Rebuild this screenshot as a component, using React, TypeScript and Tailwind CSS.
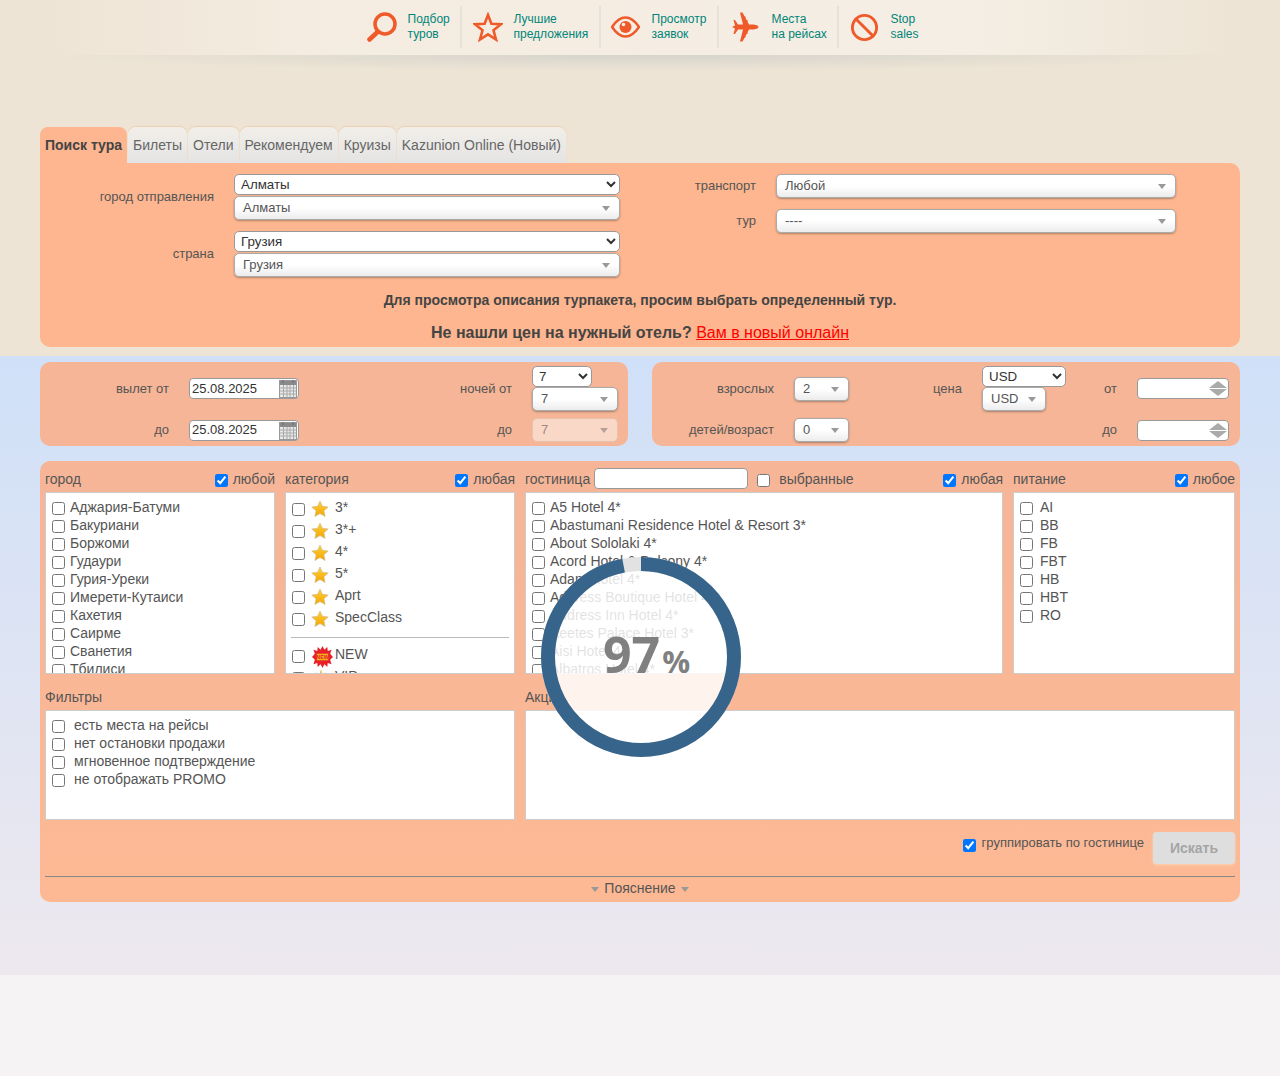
import React from 'react';
import { Ban } from 'lucide-react';

const labelCls = 'text-[13px] text-[#555] text-right';

function FakeSelect({ label, w, disabled }: { label: string; w: string; disabled?: boolean }) {
  return (
    <div
      className={`${w} relative h-[24px] flex items-center pl-2 rounded-[5px] border text-[13px] shadow-[0_1px_2px_rgba(0,0,0,0.3)] ${
        disabled
          ? 'bg-[#fad8c8] border-[#e8c0ac] text-[#a08a80] shadow-none'
          : 'bg-gradient-to-b from-white via-white to-[#ececec] border-[#aaa] text-[#555]'
      }`}
    >
      {label}
      <span
        className={`absolute right-[9px] top-[9px] w-0 h-0 border-x-[4px] border-x-transparent border-t-[5px] ${
          disabled ? 'border-t-[#b8a096]' : 'border-t-[#999]'
        }`}
      />
    </div>
  );
}

function NativeSelect({ value, w }: { value: string; w: string }) {
  return (
    <select
      defaultValue={value}
      className={`${w} h-[21px] bg-white rounded-[5px] border border-[#999] text-[13.33px] text-[#333] pl-[2px]`}
    >
      <option>{value}</option>
    </select>
  );
}

function CalendarIcon() {
  return (
    <svg width="18" height="19" viewBox="0 0 18 19" className="absolute right-[1px] top-[0px]">
      <rect x="0.5" y="1.5" width="17" height="17" fill="#e8e8e8" stroke="#999" />
      <rect x="1" y="2" width="16" height="4" fill="#8a8a8a" />
      <path d="M4 1v3M14 1v3" stroke="#777" strokeWidth="1.5" />
      <path d="M1 9h16M1 12h16M1 15h16M4.500 6v12M8 6v12M11 6v12M14.500 6v12" stroke="#aaa" strokeWidth="1" />
    </svg>
  );
}

function DateInput({ value }: { value: string }) {
  return (
    <div className="relative w-[110px] h-[21px] bg-white rounded-[4px] border border-[#999] text-[13px] text-[#333] flex items-center pl-[2px]">
      {value}
      <CalendarIcon />
    </div>
  );
}

function SpinInput() {
  return (
    <div className="relative w-[92px] h-[21px] bg-white rounded-[4px] border border-[#999]">
      <span className="absolute right-[1px] top-[2px] w-0 h-0 border-x-[9px] border-x-transparent border-b-[7px] border-b-[#aaa]" />
      <span className="absolute right-[1px] bottom-[2px] w-0 h-0 border-x-[9px] border-x-transparent border-t-[7px] border-t-[#aaa]" />
    </div>
  );
}

function GoldStar() {
  return (
    <svg width="18" height="18" viewBox="0 0 18 18" className="shrink-0">
      <defs>
        <linearGradient id="gold" x1="0" y1="0" x2="0" y2="1">
          <stop offset="0" stopColor="#ffd23c" />
          <stop offset="1" stopColor="#f5a400" />
        </linearGradient>
      </defs>
      <path d="M9 1l2.400 5.300 5.800.6-4.300 3.900 1.200 5.700L9 13.600l-5.100 2.900 1.200-5.700L.8 6.900l5.800-.6z" fill="url(#gold)" stroke="#c9b98c" strokeWidth="0.6" />
    </svg>
  );
}

function NewBurst() {
  return (
    <svg width="21" height="22" viewBox="0 0 22 20" className="shrink-0" preserveAspectRatio="none">
      <polygon
        points="11,0 13,3.500 16,1 16.500,4.500 20.500,3.500 19,7 22,10 19,12.500 20.500,16.500 16.500,15.500 16,19 13,16.500 11,20 9,16.500 6,19 5.500,15.500 1.500,16.500 3,12.500 0,10 3,7 1.500,3.500 5.500,4.500 6,1 9,3.500"
        fill="#e8202a"
      />
      <rect x="5" y="7" width="12" height="6" fill="#f3b01c" />
      <text x="11" y="12" textAnchor="middle" fontSize="5.500" fontWeight="700" fill="#e8202a" fontFamily="Liberation Sans">NEW</text>
    </svg>
  );
}

function Crown() {
  return (
    <svg width="12" height="12" viewBox="0 0 12 12" className="shrink-0">
      <path d="M1 11L1.500 4 4.200 7 6 1l1.800 6 2.700-3 .5 7z" fill="#e2c46c" />
    </svg>
  );
}

function CheckRow({ label, textCls = 'ml-[5px]' }: { label: string; textCls?: string }) {
  return (
    <div className="h-[18px] flex items-center leading-[18px] whitespace-nowrap">
      <input type="checkbox" className="mt-[2px] shrink-0" />
      <span className={textCls}>{label}</span>
    </div>
  );
}

function CatRow({ label }: { label: string }) {
  return (
    <div className="h-[22px] flex items-center whitespace-nowrap">
      <input type="checkbox" className="mt-[2px] shrink-0" />
      <span className="ml-[6px] mt-[2px]"><GoldStar /></span>
      <span className="ml-[6px] -mt-[1px]">{label}</span>
    </div>
  );
}

function AnyCheck({ label }: { label: string }) {
  return (
    <label className="flex items-center gap-[5px]">
      <input type="checkbox" defaultChecked className="mt-[2px]" />
      <span>{label}</span>
    </label>
  );
}

const cities = ['Аджария-Батуми', 'Бакуриани', 'Боржоми', 'Гудаури', 'Гурия-Уреки', 'Имерети-Кутаиси', 'Кахетия', 'Саирме', 'Сванетия', 'Тбилиси'];
const cats = ['3*', '3*+', '4*', '5*', 'Aprt', 'SpecClass'];
const hotels = [
  'A5 Hotel 4*',
  'Abastumani Residence Hotel & Resort 3*',
  'About Sololaki 4*',
  'Acord Hotel & Balcony 4*',
  'Adam Hotel 4*',
  'Address Boutique Hotel 4*',
  'Address Inn Hotel 4*',
  'Aeetes Palace Hotel 3*',
  'Aisi Hotel 4*',
  'Albatros Hotel 4*',
];
const meals = ['AI', 'BB', 'FB', 'FBT', 'HB', 'HBT', 'RO'];
const filters = ['есть места на рейсы', 'нет остановки продажи', 'мгновенное подтверждение', 'не отображать PROMO'];
const tabs = ['Билеты', 'Отели', 'Рекомендуем', 'Круизы', 'Kazunion Online (Новый)'];

const orange = '#ef5a2b';

const navItems = [
  {
    w: 'w-[95px]',
    lines: ['Подбор', 'туров'],
    gap: 'ml-[11px]',
    icon: (
      <svg width="30" height="30" viewBox="0 0 30 30" fill="none" stroke={orange}>
        <circle cx="18" cy="12" r="10" strokeWidth="3.500" />
        <path d="M10.500 20L2.500 27.500" strokeWidth="4.500" strokeLinecap="round" />
      </svg>
    ),
  },
  {
    w: 'w-[139px]',
    lines: ['Лучшие', 'предложения'],
    gap: 'ml-[11px] ',
    pad: 'pl-[11px]',
    icon: (
      <svg width="30" height="30" viewBox="0 0 30 30" fill="none" stroke={orange} strokeWidth="2.600">
        <path d="M15 3l3.400 8.800 9.600.5-7.500 6 2.500 9.200L15 22.400 7 27.500l2.500-9.200-7.500-6 9.600-.5z" />
      </svg>
    ),
  },
  {
    w: 'w-[118px]',
    lines: ['Просмотр', 'заявок'],
    gap: 'ml-[12px]',
    pad: 'pl-[10px]',
    icon: (
      <svg width="29" height="22" viewBox="0 0 29 22" fill="none">
        <path d="M1 11C6 3.500 10 1.500 14.500 1.500S23 3.500 28 11c-5 7.500-9 9.500-13.500 9.500S6 18.500 1 11z" stroke={orange} strokeWidth="2.500" />
        <circle cx="14.500" cy="11" r="6" fill={orange} />
        <circle cx="12.500" cy="8.500" r="1.800" fill="#f5eee4" />
      </svg>
    ),
  },
  {
    w: 'w-[120px]',
    lines: ['Места', 'на рейсах'],
    gap: 'ml-[13px]',
    pad: 'pl-[13px]',
    icon: (
      <svg width="27" height="30" viewBox="0 0 27 30" fill={orange}>
        <path d="M26.500 15c0-1.500-3-2.500-6-2.500H17L10.500.500H8l3 12H6L3 8H1.500L3 13.500 0 15l3 1.500L1.500 22H3l3-4.500h5l-3 12h2.500l6.500-12h3.500c3 0 6-1 6-2.500z" />
        <path d="M10 4.500h3.500v2H10zM10 23.500h3.500v2H10zM12 8h3.500v2H12zM12 20h3.500v2H12z" />
      </svg>
    ),
  },
  {
    w: 'w-[81px]',
    lines: ['Stop', 'sales'],
    gap: 'ml-[13px]',
    pad: 'pl-[12px]',
    last: true,
    icon: <Ban size={29} color={orange} strokeWidth={2.400} className="-ml-[1px] -mr-[1px]" />,
  },
];

export default function App() {
  return (
    <div className="relative min-h-[1076px] flex flex-col bg-[#f5f3f4] text-[14px] text-[#555] font-['Liberation_Sans',Arial,sans-serif]">
      {/* beige top */}
      <div className="h-[356px] bg-[#ede4d5] px-10">
        <div className="h-[55px] bg-[linear-gradient(90deg,#ede4d5_0%,#f5ece1_22%,#f5eee4_78%,#ede4d5_100%)] flex justify-center pt-[6px] pl-[6px]">
          {navItems.map((item) => (
            <div
              key={item.lines[0]}
              className={`${item.w} ${item.pad ?? ''} h-[42px] flex items-center ${item.last ? '' : 'border-r-2 border-[#e6e2da]'}`}
            >
              {item.icon}
              <div className={`${item.gap} text-[12px] leading-[15px] text-[#00857a] whitespace-nowrap`}>
                {item.lines[0]}
                <br />
                {item.lines[1]}
              </div>
            </div>
          ))}
        </div>
        <div className="h-[16px] bg-[radial-gradient(ellipse_50%_100%_at_50%_0%,#d6d4cc,transparent)]" />

        {/* tabs */}
        <div className="mt-[56px] flex h-[36px]">
          <div className="px-[5px] pt-[1px] rounded-t-[8px] bg-[#fdb68f] font-bold text-[#444] flex items-center">Поиск тура</div>
          {tabs.map((t) => (
            <div
              key={t}
              className="ml-[1px] first:ml-0 px-[5px] pt-[1px] rounded-t-[8px] bg-gradient-to-b from-[#f2efe9] to-[#e4e4e4] shadow-[0_-1px_1px_rgba(240,190,150,0.6)] text-[#666] flex items-center"
            >
              {t}
            </div>
          ))}
        </div>

        {/* top panel */}
        <div className="h-[184px] bg-[#fdb68f] rounded-b-[10px] rounded-tr-[10px] pt-[11px]">
          <div className="flex h-[103px]">
            <div className="w-[580px]">
              <div className="flex items-center">
                <div className={`w-[174px] ${labelCls}`}>город отправления</div>
                <div className="ml-5 flex flex-col gap-[1px]">
                  <NativeSelect value="Алматы" w="w-[386px]" />
                  <FakeSelect label="Алматы" w="w-[386px]" />
                </div>
              </div>
              <div className="flex items-center mt-[11px]">
                <div className={`w-[174px] ${labelCls}`}>страна</div>
                <div className="ml-5 flex flex-col gap-[1px]">
                  <NativeSelect value="Грузия" w="w-[386px]" />
                  <FakeSelect label="Грузия" w="w-[386px]" />
                </div>
              </div>
            </div>
            <div>
              <div className="flex items-center">
                <div className={`w-[136px] ${labelCls}`}>транспорт</div>
                <div className="ml-5"><FakeSelect label="Любой" w="w-[400px]" /></div>
              </div>
              <div className="flex items-center mt-[11px]">
                <div className={`w-[136px] ${labelCls}`}>тур</div>
                <div className="ml-5"><FakeSelect label="----" w="w-[400px]" /></div>
              </div>
            </div>
          </div>
          <div className="mt-[15px] text-center font-bold text-[#444] leading-[16px]">
            Для просмотра описания турпакета, просим выбрать определенный тур.
          </div>
          <div className="mt-[16px] text-center font-bold text-[16px] text-[#444] leading-[18px]">
            Не нашли цен на нужный отель?{' '}
            <a href="#" className="font-normal text-[#ff0000] underline">Вам в новый онлайн</a>
          </div>
        </div>
      </div>

      {/* blue section */}
      <div className="h-[619px] bg-gradient-to-b from-[#cfe0f8] to-[#ede8ee] px-10 pt-[6px]">
        <div className="flex justify-between">
          <div className="w-[588px] h-[84px] bg-[#f5b596] rounded-[10px] pt-[4px] grid grid-cols-[129px_110px_193px_86px] content-start gap-x-5 gap-y-[7px] items-center">
            <div className={labelCls}>вылет от</div>
            <DateInput value="25.08.2025" />
            <div className={labelCls}>ночей от</div>
            <div className="flex flex-col gap-0">
              <NativeSelect value="7" w="w-[60px]" />
              <FakeSelect label="7" w="w-[86px]" />
            </div>
            <div className={labelCls}>до</div>
            <DateInput value="25.08.2025" />
            <div className={labelCls}>до</div>
            <FakeSelect label="7" w="w-[86px]" disabled />
          </div>
          <div className="w-[588px] h-[84px] bg-[#f5b596] rounded-[10px] pt-[4px] grid grid-cols-[122px_55px_93px_84px_31px_92px] content-start gap-x-5 gap-y-[7px] items-center">
            <div className={labelCls}>взрослых</div>
            <FakeSelect label="2" w="w-[55px]" />
            <div className={labelCls}>цена</div>
            <div className="flex flex-col gap-0">
              <NativeSelect value="USD" w="w-[84px]" />
              <FakeSelect label="USD" w="w-[64px]" />
            </div>
            <div className={labelCls}>от</div>
            <SpinInput />
            <div className={labelCls}>детей/возраст</div>
            <FakeSelect label="0" w="w-[55px]" />
            <div />
            <div />
            <div className={labelCls}>до</div>
            <SpinInput />
          </div>
        </div>

        {/* main panel */}
        <div className="mt-[15px] h-[441px] rounded-[10px] bg-gradient-to-b from-[#f6b597] to-[#fdb994] px-[5px] pt-[7px]">
          <div className="grid grid-cols-[230px_230px_478px_222px] gap-x-[10px]">
            <div className="h-[21px] pt-[2px] flex justify-between items-center"><span>город</span><AnyCheck label="любой" /></div>
            <div className="h-[21px] pt-[2px] flex justify-between items-center"><span>категория</span><AnyCheck label="любая" /></div>
            <div className="h-[21px] flex items-center">
              <span className="mt-[2px]">гостиница</span>
              <input type="text" className="ml-[4px] w-[154px] h-[21px] bg-white rounded-[4px] border border-[#999]" />
              <input type="checkbox" className="ml-[9px] mt-[4px]" />
              <span className="ml-[9px] mt-[2px]">выбранные</span>
              <span className="ml-auto mt-[2px]"><AnyCheck label="любая" /></span>
            </div>
            <div className="h-[21px] pt-[2px] flex justify-between items-center"><span>питание</span><AnyCheck label="любое" /></div>

            <div className="mt-[3px] h-[182px] bg-white border border-[#ccc] overflow-hidden pl-[6px] pt-[5px]">
              {cities.map((c) => <CheckRow key={c} label={c} />)}
            </div>
            <div className="mt-[3px] h-[182px] bg-white border border-[#ccc] overflow-hidden pl-[6px] pt-[4px]">
              {cats.map((c) => <CatRow key={c} label={c} />)}
              <div className="mt-[8px] mr-[5px] -ml-[1px] border-t border-[#bbb]" />
              <div className="mt-[7px] h-[22px] flex items-center">
                <input type="checkbox" />
                <span className="ml-[7px] mt-[2px]"><NewBurst /></span>
                <span className="ml-[2px] -mt-[4px]">NEW</span>
              </div>
              <div className="h-[22px] flex items-center">
                <input type="checkbox" />
                <span className="ml-[10px] -mt-[8px]"><Crown /></span>
                <span className="ml-[8px] -mt-[4px]">VIP</span>
              </div>
            </div>
            <div className="mt-[3px] h-[182px] bg-white border border-[#ccc] overflow-hidden pl-[6px] pt-[5px]">
              {hotels.map((h) => <CheckRow key={h} label={h} />)}
            </div>
            <div className="mt-[3px] h-[182px] bg-white border border-[#ccc] overflow-hidden pl-[6px] pt-[5px]">
              {meals.map((m) => <CheckRow key={m} label={m} textCls="ml-[7px]" />)}
            </div>
          </div>

          <div className="mt-[15px] grid grid-cols-[470px_710px] gap-x-[10px]">
            <div className="h-[21px] flex items-center"><span className="-mt-[4px]">Фильтры</span></div>
            <div className="h-[21px] flex items-center"><span className="-mt-[4px]">Акции</span></div>
            <div className="h-[110px] bg-white border border-[#ccc] pl-[6px] pt-[5px]">
              {filters.map((f) => <CheckRow key={f} label={f} textCls="ml-[9px]" />)}
            </div>
            <div className="h-[110px] bg-white border border-[#ccc]" />
          </div>

          <div className="mt-[12px] h-[32px] flex justify-end items-start">
            <label className="flex items-center gap-[5px] text-[13px] mt-[1px]">
              <input type="checkbox" defaultChecked className="mt-[5px]" />
              <span className="ml-[1px]">группировать по гостинице</span>
            </label>
            <button className="ml-[9px] w-[82px] h-[32px] rounded-[4px] bg-[#dedede] font-bold text-[#a5a5a5] shadow-[0_1px_3px_rgba(255,220,190,0.8)]">
              Искать
            </button>
          </div>
          <div className="mt-[12px] border-t border-[#888]" />
          <div className="h-[22px] flex items-center justify-center gap-[5px]">
            <span className="w-0 h-0 mt-[2px] border-x-[4px] border-x-transparent border-t-[5px] border-t-[#999]" />
            <span>Пояснение</span>
            <span className="w-0 h-0 mt-[2px] border-x-[4px] border-x-transparent border-t-[5px] border-t-[#999]" />
          </div>
        </div>
      </div>

      <div className="flex-1" />

      {/* progress overlay */}
      <div className="absolute left-[541px] top-[557px] w-[200px] h-[200px]">
        <svg width="200" height="200" viewBox="0 0 200 200" className="absolute inset-0">
          <circle cx="100" cy="100" r="93" fill="#ffffff" fillOpacity="0.83" stroke="#e2e2e2" strokeWidth="14" />
          <circle
            cx="100"
            cy="100"
            r="93"
            fill="none"
            stroke="#36648a"
            strokeWidth="14"
            pathLength={100}
            strokeDasharray="97 3"
            transform="rotate(-90 100 100)"
          />
        </svg>
        <div className="absolute left-[62px] top-[67px] flex items-baseline font-['Open_Sans',sans-serif] font-bold text-[#808080] leading-[60px]">
          <span className="text-[50px]">97</span>
          <span className="text-[31px] ml-[2px]">%</span>
        </div>
      </div>
    </div>
  );
}
